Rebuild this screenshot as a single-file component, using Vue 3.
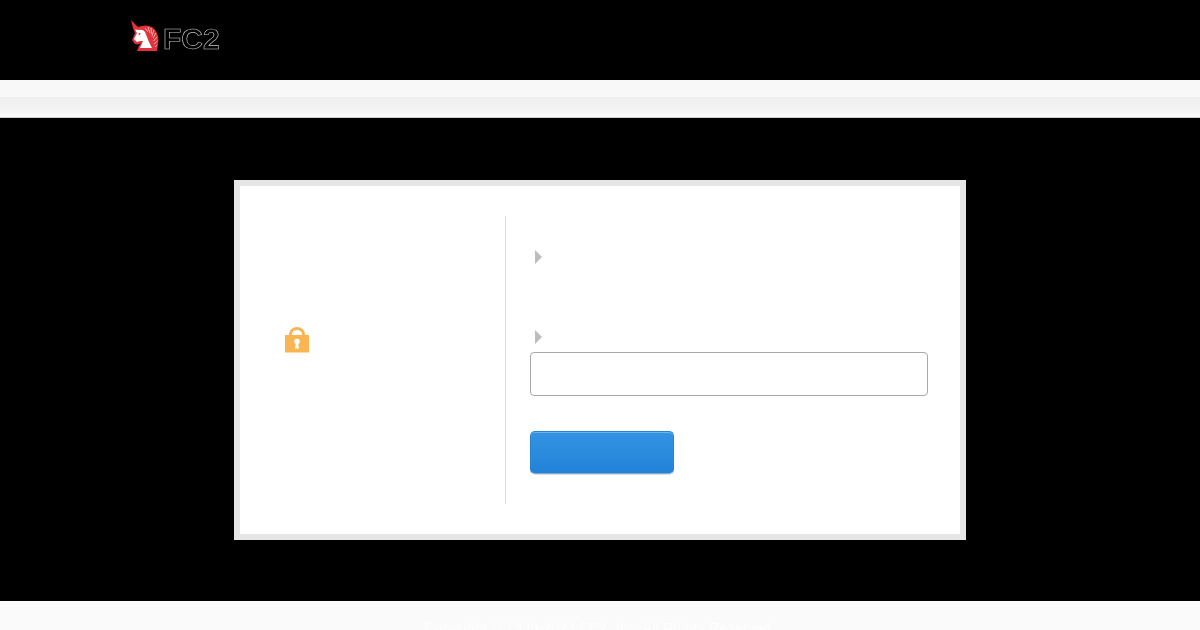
<script setup>
</script>

<template>
  <div class="page">
    <header class="top">
      <div class="logo">
        <svg class="uni" width="30" height="32" viewBox="0 0 30 32">
          <path d="M1 0 L8 7 Q16 4 22 7 Q28 11 28.500 20 L27 31 L7 31 L9 26 L11 23 L8 24.500 L5 24 L2 20 L5 13 L3 8 Z" fill="#e2323c"/>
          <path d="M5 9.500 L9 10 Q13 9 15 12 L17 17 L19 22 L22 28 L10 28 L13 21 L10 21 L7 22 L4 19 L7 13 Z" fill="#fff"/>
          <circle cx="9.500" cy="14" r="1" fill="#e2323c"/>
          <path d="M15 8 L18 12 M18 7 L20 13 M21 8 L21.500 14 M24 10 L22 16 M26 13 L23 18 M27 17 L23.500 21 M27.500 21 L24 24 M27 25 L25 27" stroke="#fbb" stroke-width="0.9" fill="none"/>
        </svg>
        <span class="brand">FC2</span>
      </div>
    </header>
    <div class="band">
      <div class="band-top"></div>
      <div class="band-bottom"></div>
    </div>
    <main class="stage">
      <section class="card">
        <div class="left">
          <svg class="lock" width="26" height="26" viewBox="0 0 26 26">
            <path d="M6.500 10 V7 A6.500 5.500 0 0 1 19.500 7 V10" fill="none" stroke="#f8b551" stroke-width="3"/>
            <rect x="1" y="8" width="24" height="17.500" fill="#f8b551"/>
            <circle cx="13" cy="14.500" r="2.800" fill="#fff"/>
            <path d="M12 15 H14 L15 21.500 H11 Z" fill="#fff"/>
          </svg>
        </div>
        <div class="right">
          <div class="row first"><i class="arrow"></i></div>
          <div class="row second"><i class="arrow"></i></div>
          <div class="input"></div>
          <div class="btn"></div>
        </div>
      </section>
    </main>
    <footer class="foot">
      <span>Copyright © 1999-2024 FC2, Inc. All Rights Reserved.</span>
    </footer>
  </div>
</template>

<style>
html, body { margin: 0; background: #000; overflow: hidden; }
</style>

<style scoped>
.page { width: 1200px; height: 630px; display: flex; flex-direction: column; background: #000; overflow: hidden; font-family: "Liberation Sans", Arial, sans-serif; }
.top { height: 80px; flex: none; padding-left: 130px; box-sizing: border-box; }
.logo { display: flex; align-items: flex-start; padding-top: 20px; }
.uni { flex: none; }
.brand { margin: 4px 0 0 3px; font-size: 30px; line-height: 30px; font-weight: 700; color: #000; -webkit-text-stroke: 0.6px #ccc; will-change: transform; opacity: 0.99; }
.band { height: 38px; flex: none; display: flex; flex-direction: column; }
.band-top { height: 18px; background: #f8f8f8; border-bottom: 1px solid #efefef; box-sizing: border-box; }
.band-bottom { flex: 1; background: linear-gradient(#efefef, #f4f4f4 70%, #fbfbfb); border-bottom: 1px solid #ccc; }
.stage { flex: 1; display: flex; justify-content: center; padding-top: 62px; box-sizing: border-box; min-height: 0; }
.card { width: 732px; height: 360px; box-sizing: border-box; border: 6px solid #e6e6e6; background: #fff; display: flex; padding: 30px 0; }
.left { width: 266px; flex: none; box-sizing: border-box; border-right: 1px solid #ddd; padding: 111px 0 0 39px; }
.lock { display: block; margin-left: 5px; }
.right { flex: 1; padding-left: 24px; }
.row { height: 16px; display: flex; align-items: center; }
.first { margin-top: 33px; }
.second { margin-top: 64px; }
.arrow { display: block; margin-left: 5px; width: 0; height: 0; border-left: 7px solid #bdbdbd; border-top: 7px solid transparent; border-bottom: 7px solid transparent; }
.input { width: 398px; height: 44px; margin-top: 7px; box-sizing: border-box; border: 1px solid #aaa; border-radius: 4px; background: #fff; }
.btn { width: 144px; height: 43px; margin-top: 35px; box-sizing: border-box; border-radius: 5px; border: 1px solid #2a83d2; border-bottom-color: #7fa9cf; background: linear-gradient(#3494e2, #2282d8); box-shadow: inset 0 1px 0 #6ab4ee, 0 1px 1px #ddd; }
.foot { height: 29px; flex: none; background: #fafafa; border-top: 1px solid #fff; text-align: center; box-sizing: border-box; padding-top: 18px; font-size: 14px; line-height: 16px; letter-spacing: 0.3px; color: #fff; }
</style>
